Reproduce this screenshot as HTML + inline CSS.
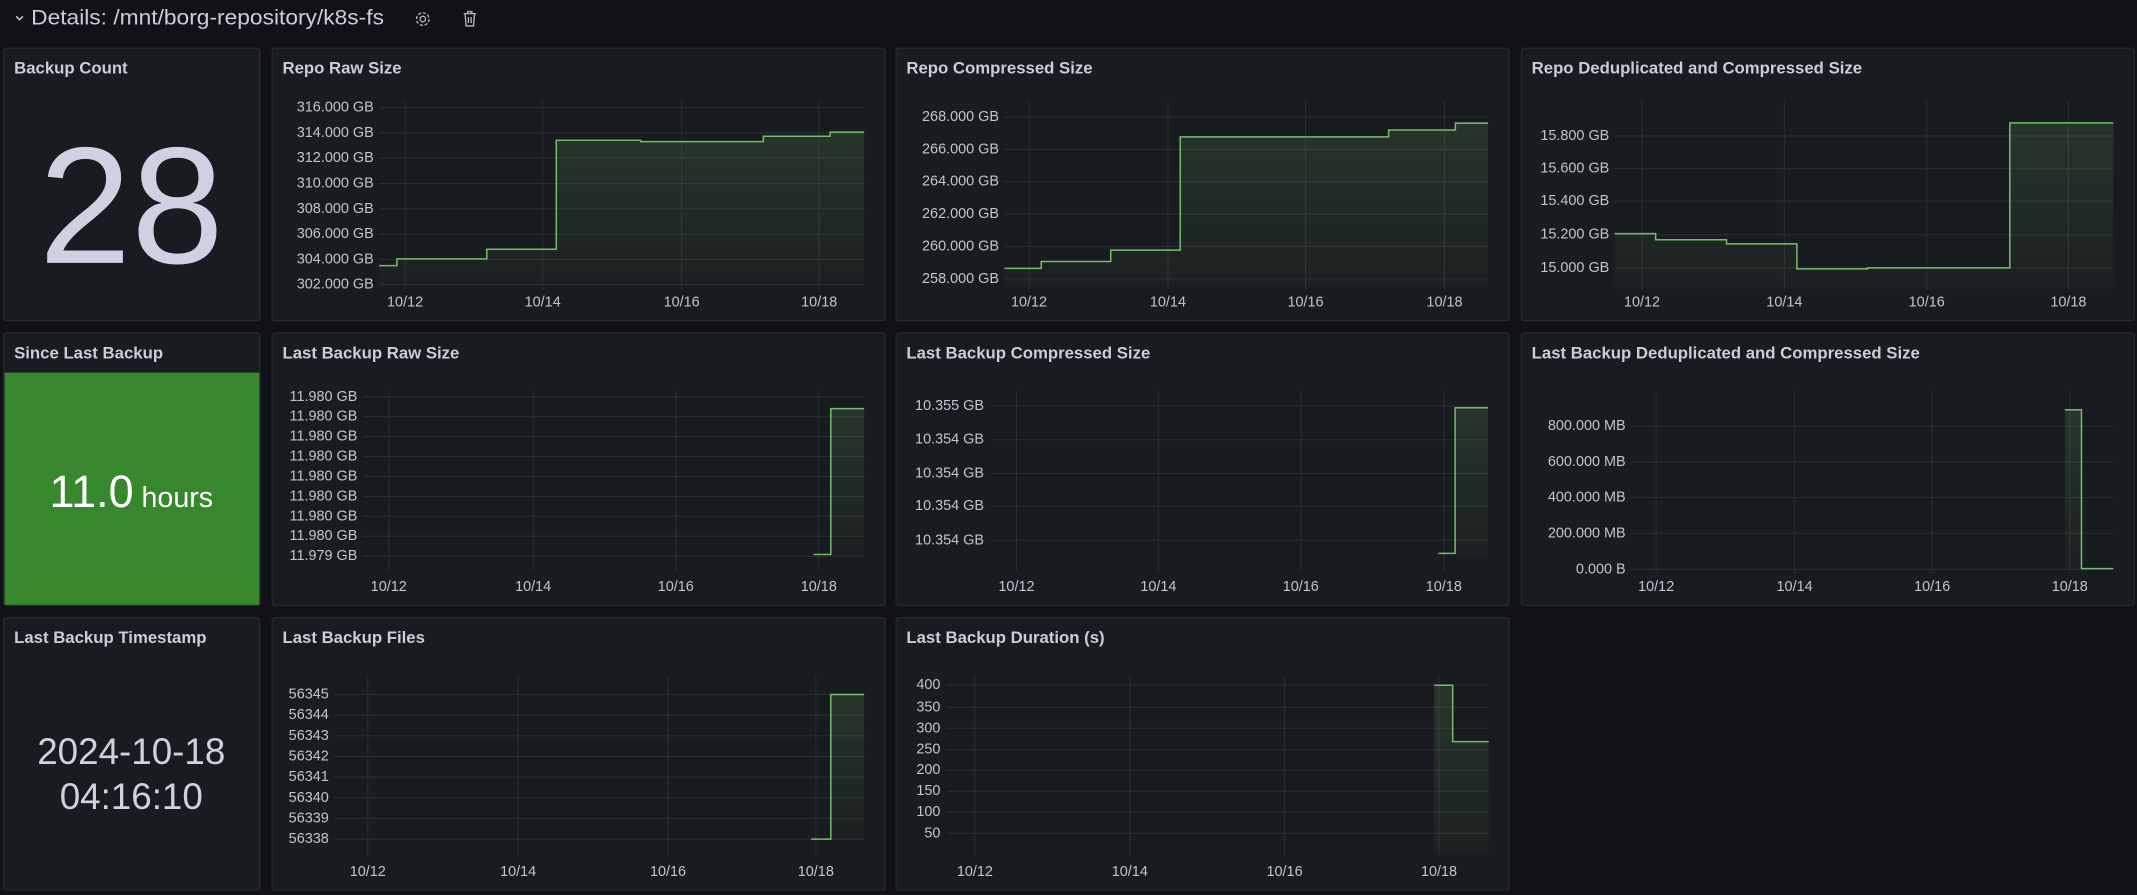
<!DOCTYPE html>
<html><head><meta charset="utf-8">
<style>
html,body{margin:0;padding:0;background:#111217;overflow:hidden}
svg{display:block}
text{font-family:"Liberation Sans",sans-serif}
.t{fill:#ccccdc;font-size:12.3px;font-weight:bold}
.ax{fill:#c2c3cf;font-size:10.6px}
.g{stroke:#2a2d33;stroke-width:0.8}
.l{fill:none;stroke:#73bf69;stroke-width:1.1}
.f{fill:url(#gr)}
.p{fill:#181b1f;stroke:#2a2d33;stroke-width:0.8}
</style></head>
<body>
<svg width="2137" height="895" viewBox="0 0 1568 657" xmlns="http://www.w3.org/2000/svg">
<defs>
<linearGradient id="gr" x1="0" y1="0" x2="0" y2="1">
<stop offset="0" stop-color="#73bf69" stop-opacity="0.16"/>
<stop offset="1" stop-color="#73bf69" stop-opacity="0.03"/>
</linearGradient>
</defs>
<rect width="1568" height="657" fill="#111217"/>
<!-- header -->
<path d="M11.5,12 l2.5,2.5 l2.5,-2.5" fill="none" stroke="#ccccdc" stroke-width="1.1"/>
<text x="22.5" y="18" fill="#ccccdc" style="font-size:15.5px" textLength="259" lengthAdjust="spacingAndGlyphs">Details: /mnt/borg-repository/k8s-fs</text>
<g fill="none" stroke="#b4b5c0" stroke-width="1">
<circle cx="310" cy="14" r="2"/>
<circle cx="310" cy="14" r="4.6" stroke-dasharray="2.2 1.4"/>
<path d="M340,10 h9 M343,10 v-1.5 h3 v1.5 M341,10 l0.8,9 h5.4 l0.8,-9 M343.5,12.5 v4.5 M345.5,12.5 v4.5"/>
</g>

<!-- panels -->
<rect class="p" x="2.4" y="35.4" width="188" height="200" rx="2"/>
<rect class="p" x="199.4" y="35.4" width="450" height="200" rx="2"/>
<rect class="p" x="657.4" y="35.4" width="450" height="200" rx="2"/>
<rect class="p" x="1116.4" y="35.4" width="450" height="200" rx="2"/>
<rect class="p" x="2.4" y="244.4" width="188" height="200" rx="2"/>
<rect class="p" x="199.4" y="244.4" width="450" height="200" rx="2"/>
<rect class="p" x="657.4" y="244.4" width="450" height="200" rx="2"/>
<rect class="p" x="1116.4" y="244.4" width="450" height="200" rx="2"/>
<rect class="p" x="2.4" y="453.4" width="188" height="200" rx="2"/>
<rect class="p" x="199.4" y="453.4" width="450" height="200" rx="2"/>
<rect class="p" x="657.4" y="453.4" width="450" height="200" rx="2"/>

<!-- titles -->
<text class="t" x="10" y="54">Backup Count</text>
<text class="t" x="207" y="54">Repo Raw Size</text>
<text class="t" x="665" y="54">Repo Compressed Size</text>
<text class="t" x="1124" y="54">Repo Deduplicated and Compressed Size</text>
<text class="t" x="10" y="263">Since Last Backup</text>
<text class="t" x="207" y="263">Last Backup Raw Size</text>
<text class="t" x="665" y="263">Last Backup Compressed Size</text>
<text class="t" x="1124" y="263">Last Backup Deduplicated and Compressed Size</text>
<text class="t" x="10" y="472">Last Backup Timestamp</text>
<text class="t" x="207" y="472">Last Backup Files</text>
<text class="t" x="665" y="472">Last Backup Duration (s)</text>

<!-- stat: backup count -->
<text x="96" y="193" text-anchor="middle" fill="#d0d1e0" style="font-size:122px">28</text>
<!-- stat: since last -->
<rect x="3" y="273.5" width="187" height="170.5" fill="#37872d"/>
<text x="96" y="372" text-anchor="middle" fill="#ffffff"><tspan style="font-size:33px">11.0</tspan><tspan style="font-size:21px"> hours</tspan></text>
<!-- stat: timestamp -->
<text x="96" y="561" text-anchor="middle" fill="#d0d1e0" style="font-size:27px">2024-10-18</text>
<text x="96" y="594" text-anchor="middle" fill="#d0d1e0" style="font-size:27px">04:16:10</text>

<!-- P2 Repo Raw Size -->
<g class="g">
<path d="M278,79H634M278,97.6H634M278,116.1H634M278,134.7H634M278,153.3H634M278,171.9H634M278,190.4H634M278,209H634"/>
<path d="M297,74V213M398,74V213M500,74V213M601,74V213"/>
</g>
<g class="ax" text-anchor="end" dominant-baseline="central">
<text x="274" y="79">316.000 GB</text><text x="274" y="97.6">314.000 GB</text><text x="274" y="116.1">312.000 GB</text><text x="274" y="134.7">310.000 GB</text><text x="274" y="153.3">308.000 GB</text><text x="274" y="171.9">306.000 GB</text><text x="274" y="190.4">304.000 GB</text><text x="274" y="209">302.000 GB</text>
</g>
<g class="ax" text-anchor="middle"><text x="297" y="225">10/12</text><text x="398" y="225">10/14</text><text x="500" y="225">10/16</text><text x="601" y="225">10/18</text></g>
<path class="f" d="M278,195H291V190H357V183H408V103H470V104H560V100H609V97H634V209H278Z"/>
<path class="l" d="M278,195H291V190H357V183H408V103H470V104H560V100H609V97H634"/>

<!-- P3 Repo Compressed -->
<g class="g">
<path d="M737,86H1092M737,109.7H1092M737,133.4H1092M737,157.2H1092M737,180.9H1092M737,204.7H1092"/>
<path d="M755,74V213M857,74V213M958,74V213M1060,74V213"/>
</g>
<g class="ax" text-anchor="end" dominant-baseline="central">
<text x="733" y="86">268.000 GB</text><text x="733" y="109.7">266.000 GB</text><text x="733" y="133.4">264.000 GB</text><text x="733" y="157.2">262.000 GB</text><text x="733" y="180.9">260.000 GB</text><text x="733" y="204.7">258.000 GB</text>
</g>
<g class="ax" text-anchor="middle"><text x="755" y="225">10/12</text><text x="857" y="225">10/14</text><text x="958" y="225">10/16</text><text x="1060" y="225">10/18</text></g>
<path class="f" d="M737,197H764V192H815V183.6H866V100.5H1019V95.4H1068V90.4H1092V210H737Z"/>
<path class="l" d="M737,197H764V192H815V183.6H866V100.5H1019V95.4H1068V90.4H1092"/>

<!-- P4 Repo Dedup -->
<g class="g">
<path d="M1185,99.8H1551M1185,123.8H1551M1185,147.7H1551M1185,172.3H1551M1185,196.6H1551"/>
<path d="M1205,74V213M1309.5,74V213M1414,74V213M1518,74V213"/>
</g>
<g class="ax" text-anchor="end" dominant-baseline="central">
<text x="1181" y="99.8">15.800 GB</text><text x="1181" y="123.8">15.600 GB</text><text x="1181" y="147.7">15.400 GB</text><text x="1181" y="172.3">15.200 GB</text><text x="1181" y="196.6">15.000 GB</text>
</g>
<g class="ax" text-anchor="middle"><text x="1205" y="225">10/12</text><text x="1309.5" y="225">10/14</text><text x="1414" y="225">10/16</text><text x="1518" y="225">10/18</text></g>
<path class="f" d="M1185,171.5H1215V176H1267V179H1318.7V197.4H1370.5V196.6H1475V90.2H1551V212H1185Z"/>
<path class="l" d="M1185,171.5H1215V176H1267V179H1318.7V197.4H1370.5V196.6H1475V90.2H1551"/>

<!-- P6 Last Backup Raw -->
<g class="g">
<path d="M266.5,291.3H634M266.5,305.9H634M266.5,320.5H634M266.5,335.1H634M266.5,349.8H634M266.5,364.4H634M266.5,379H634M266.5,393.6H634M266.5,408.3H634"/>
<path d="M285,287V419M391,287V419M495.7,287V419M600.7,287V419"/>
</g>
<g class="ax" text-anchor="end" dominant-baseline="central">
<text x="262" y="291.3">11.980 GB</text><text x="262" y="305.9">11.980 GB</text><text x="262" y="320.5">11.980 GB</text><text x="262" y="335.1">11.980 GB</text><text x="262" y="349.8">11.980 GB</text><text x="262" y="364.4">11.980 GB</text><text x="262" y="379">11.980 GB</text><text x="262" y="393.6">11.980 GB</text><text x="262" y="408.3">11.979 GB</text>
</g>
<g class="ax" text-anchor="middle"><text x="285" y="434">10/12</text><text x="391" y="434">10/14</text><text x="495.7" y="434">10/16</text><text x="600.7" y="434">10/18</text></g>
<path class="f" d="M609.5,300H634V409H609.5Z"/>
<path class="l" d="M596.8,407H609.5V300H634"/>

<!-- P7 Last Backup Compressed -->
<g class="g">
<path d="M727,298H1092M727,322.8H1092M727,347.5H1092M727,371.5H1092M727,396.6H1092"/>
<path d="M745.8,287V419M850,287V419M954.5,287V419M1059.5,287V419"/>
</g>
<g class="ax" text-anchor="end" dominant-baseline="central">
<text x="722" y="298">10.355 GB</text><text x="722" y="322.8">10.354 GB</text><text x="722" y="347.5">10.354 GB</text><text x="722" y="371.5">10.354 GB</text><text x="722" y="396.6">10.354 GB</text>
</g>
<g class="ax" text-anchor="middle"><text x="745.8" y="434">10/12</text><text x="850" y="434">10/14</text><text x="954.5" y="434">10/16</text><text x="1059.5" y="434">10/18</text></g>
<path class="f" d="M1067.8,299.3H1092V410H1067.8Z"/>
<path class="l" d="M1055.5,406.2H1067.8V299.3H1092"/>

<!-- P8 Last Backup Dedup -->
<g class="g">
<path d="M1196.6,312.8H1551M1196.6,339.3H1551M1196.6,365.2H1551M1196.6,391.5H1551M1196.6,417.9H1551"/>
<path d="M1215.4,287V421M1317,287V421M1418,287V421M1519,287V421"/>
</g>
<g class="ax" text-anchor="end" dominant-baseline="central">
<text x="1193" y="312.8">800.000 MB</text><text x="1193" y="339.3">600.000 MB</text><text x="1193" y="365.2">400.000 MB</text><text x="1193" y="391.5">200.000 MB</text><text x="1193" y="417.9">0.000 B</text>
</g>
<g class="ax" text-anchor="middle"><text x="1215.4" y="434">10/12</text><text x="1317" y="434">10/14</text><text x="1418" y="434">10/16</text><text x="1519" y="434">10/18</text></g>
<path class="f" d="M1515.4,300.8H1527.6V418H1515.4Z"/>
<path class="l" d="M1515.4,300.8H1527.6V417.4H1551"/>

<!-- P10 Last Backup Files -->
<g class="g">
<path d="M245,509.8H634M245,525H634M245,540.2H634M245,555.3H634M245,570.5H634M245,585.7H634M245,600.8H634M245,616H634"/>
<path d="M269.6,497V629M380,497V629M490,497V629M598.5,497V629"/>
</g>
<g class="ax" text-anchor="end" dominant-baseline="central">
<text x="241" y="509.8">56345</text><text x="241" y="525">56344</text><text x="241" y="540.2">56343</text><text x="241" y="555.3">56342</text><text x="241" y="570.5">56341</text><text x="241" y="585.7">56340</text><text x="241" y="600.8">56339</text><text x="241" y="616">56338</text>
</g>
<g class="ax" text-anchor="middle"><text x="269.6" y="643">10/12</text><text x="380" y="643">10/14</text><text x="490" y="643">10/16</text><text x="598.5" y="643">10/18</text></g>
<path class="f" d="M609.5,509.8H634V617H609.5Z"/>
<path class="l" d="M595,616H609.5V509.8H634"/>

<!-- P11 Last Backup Duration -->
<g class="g">
<path d="M694.6,503H1092.5M694.6,519.2H1092.5M694.6,534.6H1092.5M694.6,550.3H1092.5M694.6,565.4H1092.5M694.6,580.8H1092.5M694.6,596.2H1092.5M694.6,611.7H1092.5"/>
<path d="M715.3,497V629M829,497V629M942.6,497V629M1056,497V629"/>
</g>
<g class="ax" text-anchor="end" dominant-baseline="central">
<text x="690" y="503">400</text><text x="690" y="519.2">350</text><text x="690" y="534.6">300</text><text x="690" y="550.3">250</text><text x="690" y="565.4">200</text><text x="690" y="580.8">150</text><text x="690" y="596.2">100</text><text x="690" y="611.7">50</text>
</g>
<g class="ax" text-anchor="middle"><text x="715.3" y="643">10/12</text><text x="829" y="643">10/14</text><text x="942.6" y="643">10/16</text><text x="1056" y="643">10/18</text></g>
<path class="f" d="M1052.4,503H1066V544.4H1092.5V627H1052.4Z"/>
<path class="l" d="M1052.4,503H1066V544.4H1092.5"/>
</svg>
</body></html>
